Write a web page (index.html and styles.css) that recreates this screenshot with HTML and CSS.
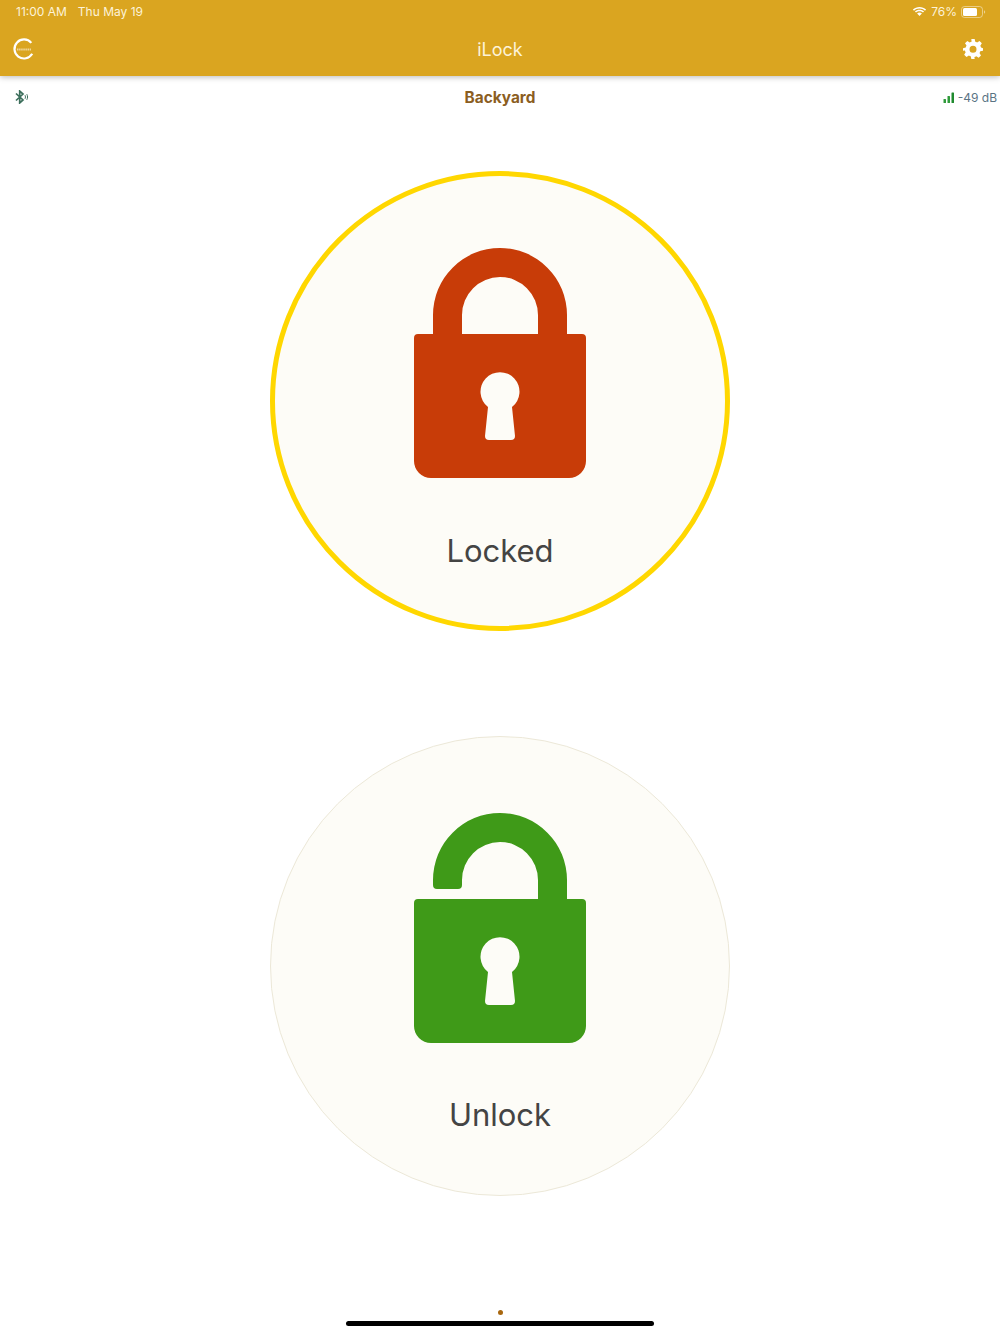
FILE: index.html
```html
<!DOCTYPE html>
<html lang="en">
<head>
  <meta charset="UTF-8">
  <meta name="viewport" content="width=device-width, initial-scale=1.0">
  <title>iLock</title>
  <link rel="stylesheet" href="styles.css">
</head>
<body>
  <header class="header">
    <div class="status-bar">
      <div class="status-left">
        <span>11:00 AM</span>
        <span>Thu May 19</span>
      </div>
      <div class="status-right">
        <svg class="wifi" width="15" height="11" viewBox="0 0 15 11">
          <path d="M7.5 2.600c2.100 0 4 .8 5.500 2.100l1.100-1.200C12.300 1.900 10 1 7.500 1S2.700 1.900.9 3.500L2 4.700c1.500-1.300 3.400-2.100 5.500-2.100z" fill="#fff"/>
          <path d="M7.500 5.300c1.300 0 2.500.5 3.500 1.300l1.100-1.200C10.900 4.300 9.300 3.700 7.500 3.700s-3.400.6-4.600 1.700L4 6.600c1-.8 2.200-1.300 3.500-1.300z" fill="#fff"/>
          <path d="M7.500 6.500c-.9 0-1.700.3-2.400.9l2.400 2.600 2.400-2.600c-.7-.6-1.500-.9-2.400-.9z" fill="#fff"/>
        </svg>
        <span>76%</span>
        <svg class="battery" width="25" height="12" viewBox="0 0 25 12">
          <rect x="0.5" y="0.500" width="21" height="11" rx="3" fill="none" stroke="#fff" stroke-opacity="0.45"/>
          <rect x="2" y="2" width="14" height="8" rx="1.500" fill="#fff"/>
          <path d="M23 4.300c.8.300 1.200.9 1.200 1.700s-.4 1.400-1.200 1.700z" fill="#fff" fill-opacity="0.5"/>
        </svg>
      </div>
    </div>
    <div class="nav-bar">
      <svg class="spinner" width="24" height="24" viewBox="0 0 24 24">
        <path d="M19.300 5.900A9.500 9.500 0 1 0 20.200 16.750" fill="none" stroke="#fff" stroke-width="2.200"/>
        <path d="M5 12.500h14" stroke="#fff" stroke-opacity="0.55" stroke-width="2" stroke-dasharray="1.500 .6"/>
      </svg>
      <h1 class="nav-title">iLock</h1>
      <svg class="gear" width="20" height="20" viewBox="0 0 24 24">
        <path fill="#fff" fill-rule="evenodd" d="M10 0h4l.7 3.300c.8.200 1.500.5 2.200.9L19.800 2.400l2.800 2.800-1.800 2.900c.4.700.7 1.400.9 2.200L24 11v3l-3.300.7c-.2.800-.5 1.500-.9 2.200l1.800 2.900-2.800 2.800-2.900-1.800c-.7.400-1.400.7-2.200.9L14 24h-4l-.7-3.300c-.8-.2-1.500-.5-2.200-.9l-2.900 1.800-2.800-2.800 1.800-2.900c-.4-.7-.7-1.400-.9-2.200L0 14v-3l3.300-.9c.2-.8.500-1.500.9-2.200L2.400 5.200l2.800-2.800 2.900 1.800c.7-.4 1.400-.7 2.200-.9zM12 8a4.200 4.200 0 1 0 0 8.400A4.200 4.200 0 0 0 12 8z"/>
      </svg>
    </div>
  </header>

  <div class="info-bar">
    <svg class="bluetooth" width="14" height="14" viewBox="0 0 14 14">
      <path d="M1 3.500l7 6.500L4.700 13V1L8 4l-7 6.500" fill="none" stroke="#3d6f5c" stroke-width="1.700"/>
      <path d="M10 5.200c.6 1.100.6 2.500 0 3.600M11.800 4.200c1 1.800 1 3.800 0 5.600" fill="none" stroke="#3d6f5c" stroke-width="1"/>
    </svg>
    <span class="lock-name">Backyard</span>
    <div class="signal">
      <svg width="12" height="11" viewBox="0 0 12 11">
        <rect x="0.500" y="7" width="2.500" height="4" rx="0.500" fill="#2f9a3a"/>
        <rect x="4.500" y="4" width="2.500" height="7" rx="0.500" fill="#2f9a3a"/>
        <rect x="8.500" y="0.500" width="2.500" height="10.500" rx="0.500" fill="#1f8a2e"/>
      </svg>
      <span>-49 dB</span>
    </div>
  </div>

  <main class="main">
    <div class="lock-button active">
      <svg class="lock-icon locked" width="172" height="230" viewBox="0 0 172 230">
        <path fill-rule="evenodd" d="M19 87V67a67 67 0 0 1 134 0v20h-29V67a38 38 0 0 0-76 0v20z"/>
        <path fill-rule="evenodd" d="M4 86h164a4 4 0 0 1 4 4v123a17 17 0 0 1-17 17H17a17 17 0 0 1-17-17V90a4 4 0 0 1 4-4zM74 159l-3 29a4 4 0 0 0 4 4h22a4 4 0 0 0 4-4l-3-29a19.500 19.500 0 1 0-24 0z"/>
      </svg>
      <span class="lock-label">Locked</span>
    </div>
    <div class="lock-button">
      <svg class="lock-icon unlocked" width="172" height="230" viewBox="0 0 172 230">
        <path d="M19 72V67a67 67 0 0 1 134 0v20h-29V67a38 38 0 0 0-76 0v5a4 4 0 0 1-4 4H23a4 4 0 0 1-4-4z"/>
        <path fill-rule="evenodd" d="M4 86h164a4 4 0 0 1 4 4v123a17 17 0 0 1-17 17H17a17 17 0 0 1-17-17V90a4 4 0 0 1 4-4zM74 159l-3 29a4 4 0 0 0 4 4h22a4 4 0 0 0 4-4l-3-29a19.500 19.500 0 1 0-24 0z"/>
      </svg>
      <span class="lock-label">Unlock</span>
    </div>
  </main>

  <footer class="footer">
    <span class="page-dot"></span>
    <span class="home-bar"></span>
  </footer>
</body>
</html>
```

FILE: styles.css
```css
body {
  margin: 0;
  height: 1334px;
  overflow: hidden;
  display: flex;
  flex-direction: column;
  font-family: Inter, "Liberation Sans", sans-serif;
  background: #fff;
  color: #444;
}

.header {
  height: 76px;
  background: #daa520;
  color: #fff;
  box-shadow: 0 1px 6px rgba(0, 0, 0, 0.28);
}

.status-bar {
  height: 23px;
  padding: 0 14px 0 16px;
  display: flex;
  justify-content: space-between;
  align-items: center;
  font-size: 12px;
  color: #fdf3d8;
}

.status-left {
  display: flex;
  gap: 11px;
}

.status-right {
  display: flex;
  align-items: center;
  gap: 4px;
}

.nav-bar {
  height: 51px;
  padding: 0 17px 0 12px;
  display: grid;
  grid-template-columns: minmax(0, 1fr) auto minmax(0, 1fr);
  align-items: center;
}

.gear {
  justify-self: end;
}

.nav-title {
  margin: 2px 0 0 5px;
  font-size: 18px;
  font-weight: 400;
  color: #fdf3d8;
}

.info-bar {
  height: 42px;
  padding: 0 3px;
  display: grid;
  grid-template-columns: minmax(0, 1fr) auto minmax(0, 1fr);
  align-items: center;
}

.bluetooth {
  margin-left: 12px;
}

.lock-name {
  font-size: 15.400px;
  font-weight: 700;
  color: #8b5e1f;
}

.signal {
  justify-self: end;
  display: flex;
  align-items: center;
  gap: 3px;
  font-size: 12px;
  color: #5a7484;
}

.main {
  padding-top: 53px;
  display: flex;
  flex-direction: column;
  align-items: center;
  gap: 105px;
}

.lock-button {
  width: 460px;
  height: 460px;
  box-sizing: border-box;
  padding-top: 76px;
  border-radius: 50%;
  border: 1px solid #ece8d8;
  background: #fdfcf7;
  display: flex;
  flex-direction: column;
  align-items: center;
}

.lock-button.active {
  padding-top: 72px;
  border: 5px solid #ffd700;
}

.lock-icon.locked {
  fill: #c83c08;
}

.lock-icon.unlocked {
  fill: #3f9a18;
}

.lock-label {
  margin-top: 52px;
  font-size: 31px;
  line-height: 40px;
  color: #444;
}

.active .lock-label {
  margin-top: 53px;
}

.footer {
  margin-top: auto;
  height: 24px;
  display: flex;
  flex-direction: column;
  align-items: center;
  gap: 6px;
}

.page-dot {
  width: 5px;
  height: 5px;
  border-radius: 50%;
  background: #a8670f;
}

.home-bar {
  width: 308px;
  height: 5px;
  border-radius: 3px;
  background: #000;
}
```
